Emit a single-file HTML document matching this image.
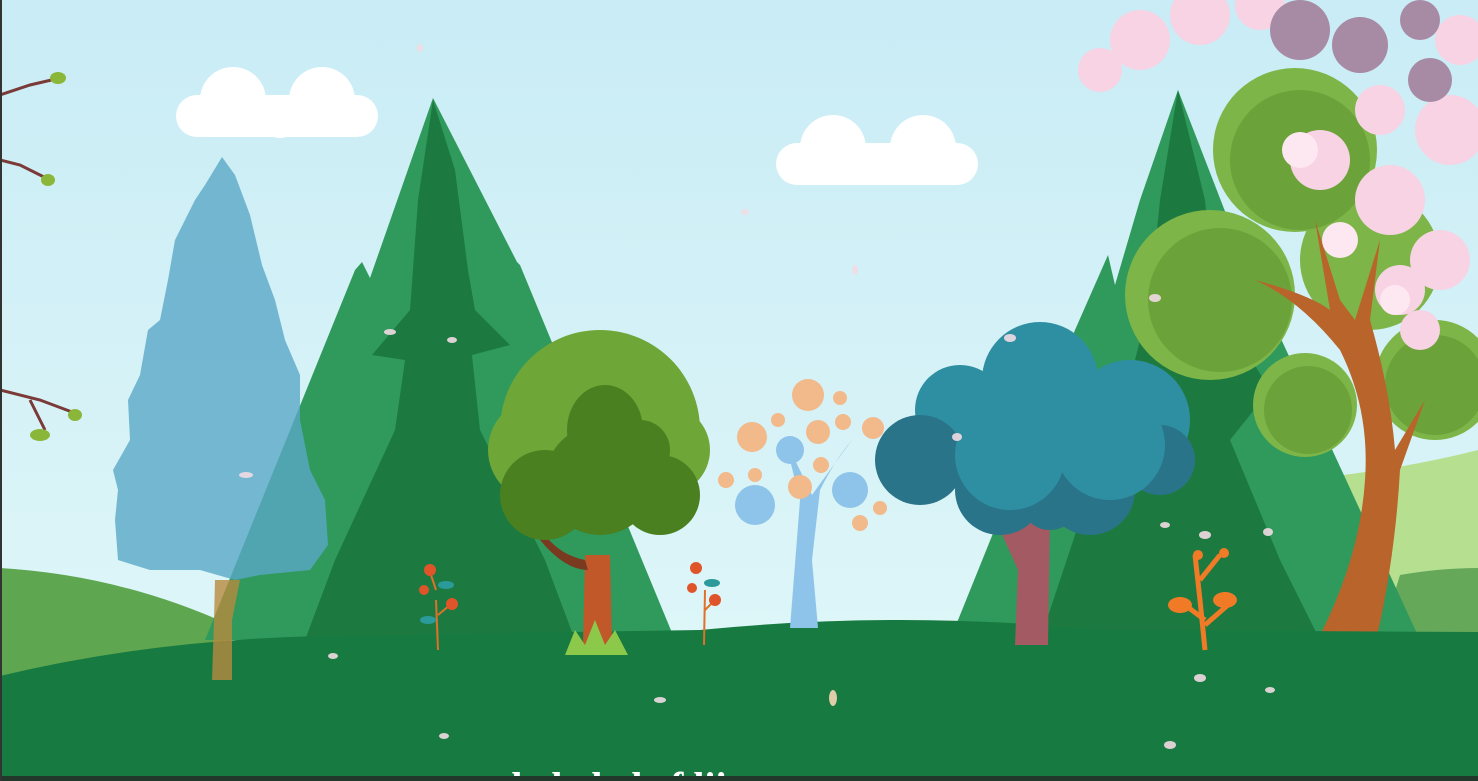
<!DOCTYPE html>
<html><head><style>
html,body{margin:0;padding:0;width:1478px;height:781px;overflow:hidden;background:#d6f3f8}
svg{display:block}
</style></head><body>
<svg width="1478" height="781" viewBox="0 0 1478 781" xmlns="http://www.w3.org/2000/svg">
<defs>
<linearGradient id="sky" x1="0" y1="0" x2="0" y2="1">
<stop offset="0" stop-color="#c9ecf6"/><stop offset="1" stop-color="#e2f8f8"/>
</linearGradient>
</defs>
<rect width="1478" height="781" fill="url(#sky)"/>
<!-- clouds -->
<g fill="#fff">
<rect x="176" y="95" width="202" height="42" rx="21"/><circle cx="233" cy="100" r="33"/><circle cx="322" cy="100" r="33"/><circle cx="280" cy="118" r="20"/>
<rect x="776" y="143" width="202" height="42" rx="21"/><circle cx="833" cy="148" r="33"/><circle cx="923" cy="148" r="33"/><circle cx="880" cy="165" r="20"/>
</g>
<!-- right light hill -->
<path d="M1300 640 L1300 480 Q1400 470 1478 450 L1478 640Z" fill="#b6e090"/>
<path d="M1380 640 L1400 575 Q1440 568 1478 568 L1478 640Z" fill="#66a85a"/>
<!-- left hill -->
<path d="M0 568 Q120 575 230 625 L230 690 L0 690Z" fill="#5fa650"/>
<!-- left mountain tree -->
<path d="M433 98 L517 262 L520 265 L675 640 L205 640 L355 270 L362 262 L370 278Z" fill="#2f9a5c"/>
<path d="M433 100 L455 170 L468 270 L475 310 L510 345 L472 355 L480 430 L545 560 L575 640 L305 640 L335 560 L395 430 L405 360 L372 355 L410 310 L418 200Z" fill="#1c7a41"/>
<!-- right mountain tree -->
<path d="M1178 90 L1240 250 L1420 640 L950 640 L1075 330 L1108 255 L1115 285 L1140 200Z" fill="#2f9a5c"/>
<path d="M1178 90 L1205 200 L1215 300 L1270 390 L1230 440 L1280 560 L1320 640 L1040 640 L1080 520 L1120 420 L1150 300 L1160 200Z" fill="#1c7a41"/>
<!-- blue tree -->
<path d="M222 157 L235 175 L250 215 L262 265 L275 300 L285 340 L300 375 L300 420 L310 470 L325 500 L328 545 L310 570 L260 575 L235 580 L200 570 L150 570 L118 560 L115 520 L118 490 L113 470 L130 440 L128 400 L140 375 L148 330 L160 320 L168 280 L175 240 L195 200 L205 185Z" fill="#5aa8c7" opacity="0.8"/>
<!-- right round trees -->
<g fill="#7db548">
<circle cx="1295" cy="150" r="82"/><circle cx="1210" cy="295" r="85"/><circle cx="1305" cy="405" r="52"/><circle cx="1435" cy="380" r="60"/><circle cx="1370" cy="260" r="70"/>
</g>
<g fill="#6ba23a">
<circle cx="1300" cy="160" r="70"/><circle cx="1220" cy="300" r="72"/><circle cx="1308" cy="410" r="44"/><circle cx="1435" cy="385" r="50"/>
</g>
<!-- cherry trunk -->
<path d="M1315 645 Q1360 560 1365 480 Q1370 410 1340 350 Q1300 300 1255 280 Q1310 295 1330 310 L1315 220 L1340 300 L1355 320 L1380 240 L1370 320 Q1390 390 1395 450 L1425 400 L1400 470 Q1395 560 1375 645Z" fill="#b8642a"/>
<!-- ground -->
<path d="M0 676 Q150 640 320 636 L700 630 Q900 610 1100 630 L1478 632 L1478 781 L0 781Z" fill="#177a40"/>
<path d="M215 580 L240 580 L232 620 L232 680 L212 680 L214 620Z" fill="#b88a3e" opacity="0.8"/>
<!-- round green tree -->
<path d="M585 555 L610 555 L612 645 L583 645Z" fill="#c0582a"/>
<path d="M540 540 Q565 570 588 570 L585 560 Q560 555 545 535Z" fill="#7a3a20"/>
<g fill="#6fa638"><circle cx="600" cy="430" r="100"/><circle cx="540" cy="450" r="52"/><circle cx="665" cy="450" r="45"/></g>
<g fill="#4a8020"><ellipse cx="605" cy="430" rx="38" ry="45"/><circle cx="545" cy="495" r="45"/><circle cx="600" cy="480" r="55"/><circle cx="660" cy="495" r="40"/><circle cx="640" cy="450" r="30"/></g>
<path d="M565 655 L575 630 L585 645 L595 620 L605 645 L615 630 L628 655Z" fill="#8cc84a"/>
<!-- pale blue tree -->
<path d="M790 628 L818 628 L812 560 L820 490 Q835 460 852 440 Q830 470 812 495 Q795 460 785 440 Q795 480 800 500 Z" fill="#8ec4ea"/>
<g fill="#8ec4ea"><circle cx="755" cy="505" r="20"/><circle cx="850" cy="490" r="18"/><circle cx="790" cy="450" r="14"/></g>
<g fill="#f2b98a"><circle cx="808" cy="395" r="16"/><circle cx="752" cy="437" r="15"/><circle cx="818" cy="432" r="12"/><circle cx="873" cy="428" r="11"/><circle cx="800" cy="487" r="12"/><circle cx="840" cy="398" r="7"/><circle cx="778" cy="420" r="7"/><circle cx="755" cy="475" r="7"/><circle cx="821" cy="465" r="8"/><circle cx="860" cy="523" r="8"/><circle cx="726" cy="480" r="8"/><circle cx="880" cy="508" r="7"/><circle cx="843" cy="422" r="8"/></g>
<!-- teal tree -->
<path d="M1005 520 L1050 520 L1048 645 L1015 645 L1018 570 L1000 530Z" fill="#a35a62"/>
<g fill="#2e8fa3"><circle cx="1040" cy="380" r="58"/><circle cx="960" cy="410" r="45"/><circle cx="1130" cy="420" r="60"/><circle cx="1040" cy="440" r="80"/></g>
<g fill="#2a7489"><circle cx="920" cy="460" r="45"/><circle cx="1000" cy="490" r="45"/><circle cx="1090" cy="490" r="45"/><circle cx="1160" cy="460" r="35"/><circle cx="1050" cy="500" r="30"/></g>
<g fill="#2e8fa3"><circle cx="1010" cy="455" r="55"/><circle cx="1110" cy="445" r="55"/></g>
<!-- cherry blossoms -->
<g fill="#f7d3e3"><circle cx="1140" cy="40" r="30"/><circle cx="1100" cy="70" r="22"/><circle cx="1200" cy="15" r="30"/><circle cx="1260" cy="5" r="25"/><circle cx="1320" cy="160" r="30"/><circle cx="1390" cy="200" r="35"/><circle cx="1440" cy="260" r="30"/><circle cx="1400" cy="290" r="25"/><circle cx="1450" cy="130" r="35"/><circle cx="1380" cy="110" r="25"/><circle cx="1460" cy="40" r="25"/><circle cx="1420" cy="330" r="20"/></g>
<g fill="#a78aa4"><circle cx="1300" cy="30" r="30"/><circle cx="1360" cy="45" r="28"/><circle cx="1430" cy="80" r="22"/><circle cx="1420" cy="20" r="20"/></g>
<g fill="#fde8f2"><circle cx="1300" cy="150" r="18"/><circle cx="1340" cy="240" r="18"/><circle cx="1395" cy="300" r="15"/></g>
<!-- flowers -->
<g stroke="#e0702a" stroke-width="2" fill="none"><path d="M438 650 L436 600 M438 615 L450 605 M436 590 L430 572"/><path d="M704 645 L705 590 M705 610 L715 600"/></g>
<g fill="#e0542a"><circle cx="430" cy="570" r="6"/><circle cx="424" cy="590" r="5"/><circle cx="452" cy="604" r="6"/><circle cx="696" cy="568" r="6"/><circle cx="692" cy="588" r="5"/><circle cx="715" cy="600" r="6"/></g>
<g fill="#2a9a9a"><ellipse cx="446" cy="585" rx="8" ry="4"/><ellipse cx="428" cy="620" rx="8" ry="4"/><ellipse cx="712" cy="583" rx="8" ry="4"/></g>
<path d="M1205 650 L1200 600 M1200 600 L1195 555 M1200 580 L1220 555 M1205 620 L1185 605 M1205 625 L1228 605" stroke="#f07a25" stroke-width="5" fill="none"/>
<g fill="#f07a25"><circle cx="1198" cy="555" r="5"/><circle cx="1224" cy="553" r="5"/><ellipse cx="1180" cy="605" rx="12" ry="8"/><ellipse cx="1225" cy="600" rx="12" ry="8"/></g>
<!-- left branches -->
<g stroke="#7a3a38" stroke-width="3" fill="none"><path d="M0 95 L30 85 L60 78 M0 160 L20 165 L50 180 M0 390 L40 400 L80 415 M30 400 L45 430"/></g>
<g fill="#8ab63a"><ellipse cx="58" cy="78" rx="8" ry="6"/><ellipse cx="48" cy="180" rx="7" ry="6"/><ellipse cx="75" cy="415" rx="7" ry="6"/><ellipse cx="40" cy="435" rx="10" ry="6"/></g>
<!-- petals -->
<g fill="#f1dbe3" opacity="0.9">
<ellipse cx="333" cy="656" rx="5" ry="3"/><ellipse cx="660" cy="700" rx="6" ry="3"/><ellipse cx="833" cy="698" rx="4" ry="8" fill="#f5d6b5"/><ellipse cx="444" cy="736" rx="5" ry="3"/><ellipse cx="1270" cy="690" rx="5" ry="3"/><ellipse cx="1200" cy="678" rx="6" ry="4"/><ellipse cx="1170" cy="745" rx="6" ry="4"/>
<ellipse cx="246" cy="475" rx="7" ry="3"/><ellipse cx="390" cy="332" rx="6" ry="3"/><ellipse cx="452" cy="340" rx="5" ry="3"/><ellipse cx="957" cy="437" rx="5" ry="4"/><ellipse cx="1010" cy="338" rx="6" ry="4"/><ellipse cx="1155" cy="298" rx="6" ry="4"/><ellipse cx="1165" cy="525" rx="5" ry="3"/><ellipse cx="1205" cy="535" rx="6" ry="4"/><ellipse cx="1268" cy="532" rx="5" ry="4"/><ellipse cx="855" cy="270" rx="3" ry="5"/><ellipse cx="745" cy="212" rx="4" ry="3"/><ellipse cx="420" cy="48" rx="3" ry="4"/>
</g>
<!-- bottom text -->
<text x="500" y="800" font-family="Liberation Serif, serif" font-weight="bold" font-size="40" fill="#fff">dededede  f    lii</text>
<rect x="0" y="776" width="1478" height="5" fill="#22382b"/>
<rect x="0" y="0" width="2" height="781" fill="#333"/>
</svg>
</body></html>
